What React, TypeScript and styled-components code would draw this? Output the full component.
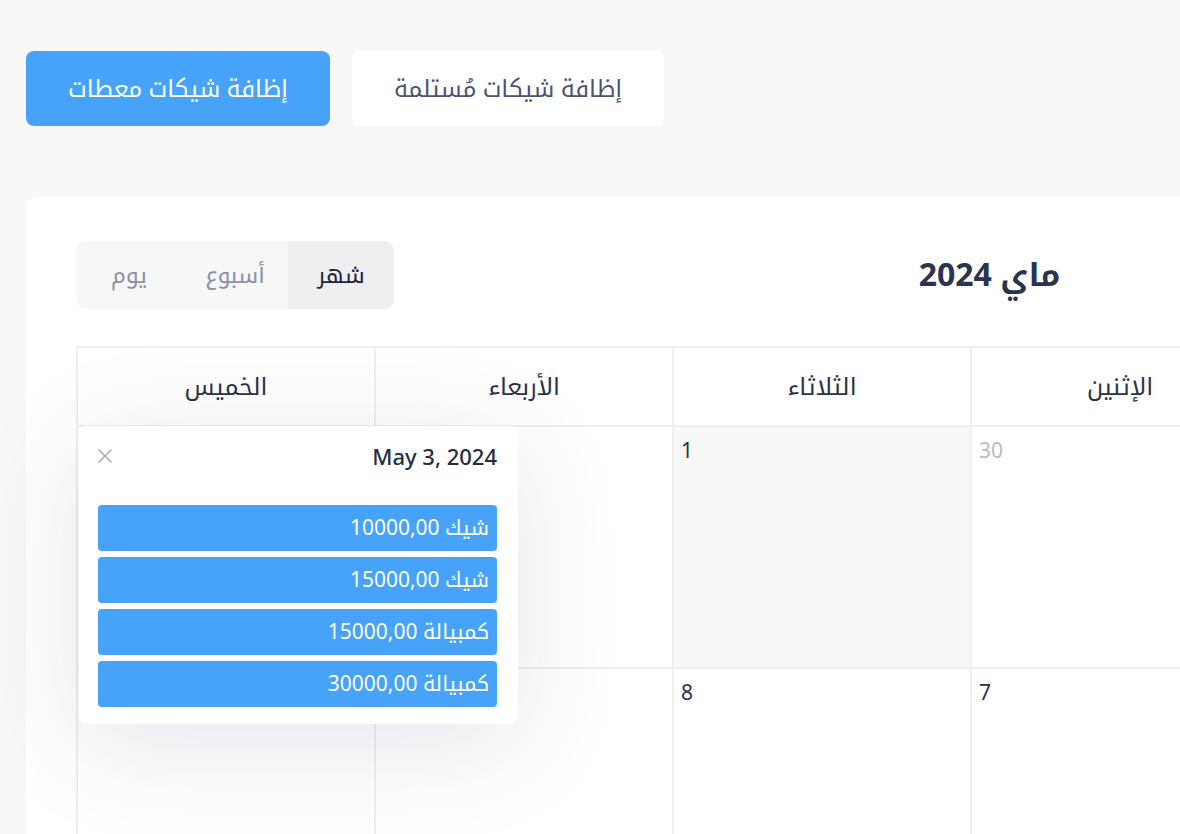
import styled, { createGlobalStyle } from "styled-components";

const GlobalStyle = createGlobalStyle`
  html, body {
    margin: 0;
    padding: 0;
    background: #f8f8f8;
    overflow: hidden;
  }
  * {
    box-sizing: border-box;
  }
`;

const FONT = `"Noto Sans", "Noto Kufi Arabic", "Noto Sans Arabic", "DejaVu Sans", sans-serif`;

// Fenêtre visible (la page est plus large que l'écran)
const Viewport = styled.div`
  width: 1180px;
  height: 834px;
  overflow: hidden;
`;

const Page = styled.div`
  width: 2240px;
  direction: rtl;
  padding: 51px 26px 0;
  font-family: ${FONT};
  color: #2a3048;
`;

const Actions = styled.div`
  display: flex;
  justify-content: flex-end;
  gap: 22px;
`;

const ActionButton = styled.button<{ $primary?: boolean }>`
  height: 75px;
  padding: 0 42px;
  border: none;
  border-radius: 8px;
  font-family: ${FONT};
  font-size: 24px;
  cursor: pointer;
  background: ${p => (p.$primary ? "#47a3f9" : "#ffffff")};
  color: ${p => (p.$primary ? "#ffffff" : "#4b5371")};
`;

const Card = styled.div`
  margin-top: 71px;
  background: #ffffff;
  border-radius: 12px;
  padding: 44px 50px 60px;
`;

const Toolbar = styled.div`
  display: flex;
  align-items: center;
  justify-content: space-between;
  height: 68px;
  margin-bottom: 37px;
`;

const NavGroup = styled.div`
  width: 579px;
  display: flex;
  gap: 10px;
`;

const NavButton = styled.button`
  height: 56px;
  padding: 0 24px;
  border: none;
  border-radius: 8px;
  background: #f7f7f8;
  color: #4b5371;
  font-family: ${FONT};
  font-size: 20px;
`;

const Title = styled.h2`
  margin: 0;
  font-size: 32px;
  font-weight: 700;
  color: #2a3350;
`;

const Tabs = styled.div`
  display: flex;
  height: 68px;
  border-radius: 10px;
  overflow: hidden;
  background: #f7f7f8;
`;

const Tab = styled.button<{ $active?: boolean }>`
  width: 106px;
  height: 100%;
  border: none;
  font-family: ${FONT};
  font-size: 23px;
  cursor: pointer;
  background: ${p => (p.$active ? "#efeff0" : "transparent")};
  color: ${p => (p.$active ? "#1c2340" : "#8b91a9")};
`;

const Grid = styled.div`
  position: relative;
  display: grid;
  grid-template-columns: repeat(7, 298px);
  border-top: 2px solid #efefef;
  border-left: 2px solid #efefef;
`;

const HeadCell = styled.div`
  height: 79px;
  display: flex;
  align-items: center;
  justify-content: center;
  border-right: 2px solid #efefef;
  border-bottom: 2px solid #efefef;
  font-size: 24px;
  color: #2b3149;
`;

const DayCell = styled.div<{ $today?: boolean }>`
  height: 242px;
  padding: 9px 7px;
  border-right: 2px solid #efefef;
  border-bottom: 2px solid #efefef;
  background: ${p => (p.$today ? "#f7f7f7" : "#ffffff")};
  display: flex;
  justify-content: flex-end;
  align-items: flex-start;
`;

const DayNumber = styled.span<{ $muted?: boolean }>`
  font-size: 21px;
  line-height: 28px;
  color: ${p => (p.$muted ? "#b9bbc5" : "#2a3048")};
`;

const Popover = styled.div`
  position: absolute;
  left: 1px;
  top: 78px;
  width: 439px;
  padding: 16px 21px 17px 19px;
  background: #ffffff;
  border-radius: 8px;
  box-shadow: 0 20px 110px rgba(40, 50, 100, 0.12);
`;

const PopoverHeader = styled.div`
  display: flex;
  align-items: center;
  justify-content: space-between;
  height: 28px;
  margin-bottom: 35px;
`;

const PopoverDate = styled.span`
  font-size: 22px;
  font-weight: 500;
  color: #252d45;
`;

const CloseButton = styled.button`
  border: none;
  background: none;
  padding: 0;
  display: flex;
  cursor: pointer;
`;

const EventList = styled.div`
  display: flex;
  flex-direction: column;
  gap: 6px;
`;

const EventItem = styled.div`
  height: 46px;
  padding: 0 8px;
  display: flex;
  align-items: center;
  border-radius: 4px;
  background: #47a3f9;
  color: #ffffff;
  font-size: 21px;
`;

const weekDays = ["الجمعة", "السبت", "الأحد", "الإثنين", "الثلاثاء", "الأربعاء", "الخميس"];

interface Day {
  n: number;
  muted?: boolean;
  today?: boolean;
}

const weeks: Day[][] = [
  [{ n: 27, muted: true }, { n: 28, muted: true }, { n: 29, muted: true }, { n: 30, muted: true }, { n: 1, today: true }, { n: 2 }, { n: 3 }],
  [{ n: 4 }, { n: 5 }, { n: 6 }, { n: 7 }, { n: 8 }, { n: 9 }, { n: 10 }],
];

const events = ["شيك 10000,00", "شيك 15000,00", "كمبيالة 15000,00", "كمبيالة 30000,00"];

function App() {
  return (
    <>
      <GlobalStyle />
      <Viewport>
        <Page>
          <Actions>
            <ActionButton>إظافة شيكات مُستلمة</ActionButton>
            <ActionButton $primary>إظافة شيكات معطات</ActionButton>
          </Actions>

          <Card>
            <Toolbar>
              <NavGroup>
                <NavButton>اليوم</NavButton>
                <NavButton>›</NavButton>
                <NavButton>‹</NavButton>
              </NavGroup>
              <Title>ماي 2024</Title>
              <Tabs>
                <Tab $active>شهر</Tab>
                <Tab>أسبوع</Tab>
                <Tab>يوم</Tab>
              </Tabs>
            </Toolbar>

            <Grid>
              {weekDays.map(d => (
                <HeadCell key={d}>{d}</HeadCell>
              ))}
              {weeks.flat().map((d, i) => (
                <DayCell key={i} $today={d.today}>
                  <DayNumber $muted={d.muted}>{d.n}</DayNumber>
                </DayCell>
              ))}

              <Popover>
                <PopoverHeader>
                  <PopoverDate>May 3, 2024</PopoverDate>
                  <CloseButton>
                    <svg width="14" height="14" viewBox="0 0 14 14">
                      <path d="M1 1L13 13M13 1L1 13" stroke="#a9acbb" strokeWidth="1.6" strokeLinecap="round" />
                    </svg>
                  </CloseButton>
                </PopoverHeader>
                <EventList>
                  {events.map((e, i) => (
                    <EventItem key={i}>{e}</EventItem>
                  ))}
                </EventList>
              </Popover>
            </Grid>
          </Card>
        </Page>
      </Viewport>
    </>
  );
}

export default App;
